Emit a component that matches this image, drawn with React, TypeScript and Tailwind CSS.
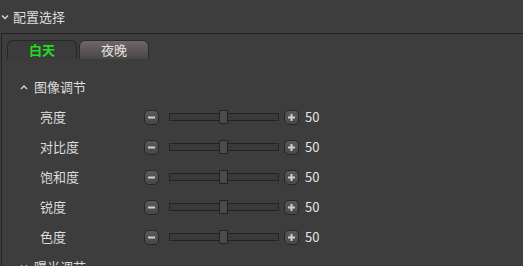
import React from "react";

const rows = ["亮度", "对比度", "饱和度", "锐度", "色度"];

const Chevron = ({ up = false }: { up?: boolean }) => (
  <svg width="8" height="6" viewBox="0 0 8 6" className="shrink-0">
    <path
      d={up ? "M1 5 L4 2 L7 5" : "M1 1.5 L4 4.5 L7 1.5"}
      fill="none"
      stroke="#d8d8d8"
      strokeWidth="1.4"
    />
  </svg>
);

const StepButton = ({ plus = false }: { plus?: boolean }) => (
  <div className="flex h-[15px] w-[15px] shrink-0 items-center justify-center rounded-[5px] border border-[#262626] bg-gradient-to-b from-[#5a5a5a] to-[#474747]">
    <svg width="9" height="9" viewBox="0 0 9 9">
      <rect x="1" y="3.5" width="7" height="2" fill="#d0d0d0" />
      {plus && <rect x="3.5" y="1" width="2" height="7" fill="#d0d0d0" />}
    </svg>
  </div>
);

const SliderRow = ({ label, value }: { label: string; value: number }) => (
  <div className="flex h-[30px] items-center">
    <div className="w-[142px] shrink-0 pl-[38px] text-[13px] text-[#dcdcdc]">{label}</div>
    <StepButton />
    <div className="relative ml-[10px] h-[8px] w-[110px] border border-[#232323] bg-[#3a3a3a]">
      <div
        className="absolute top-[-4px] h-[14px] w-[9px] border border-[#222] bg-[#4b4b4b]"
        style={{ left: `${(value / 100) * 110 - 6}px` }}
      />
    </div>
    <div className="ml-[5px]">
      <StepButton plus />
    </div>
    <div className="ml-[6px] text-[13px] text-[#e6e6e6]">{value}</div>
  </div>
);

export default function App() {
  return (
    <div
      className="h-[266px] w-[523px] overflow-hidden bg-[#3d3d3d] text-[#dcdcdc]"
      style={{ fontFamily: '"Noto Sans CJK SC", "Noto Sans", sans-serif' }}
    >
      <div className="flex h-[33px] items-center gap-[4px] pl-[1px] text-[13px]">
        <Chevron />
        <span>配置选择</span>
      </div>
      <div className="ml-[1px] h-full border-l border-t border-[#232323]">
        <div className="flex gap-[2px] pl-[5px] pt-[6px]">
          <div className="flex h-[19px] w-[70px] items-center justify-center rounded-t-[6px] border border-b-0 border-[#262626] bg-[#3b3b3b] text-[13px] font-bold text-[#22dd22]">
            白天
          </div>
          <div className="flex h-[19px] w-[70px] items-center justify-center rounded-t-[6px] border border-b-0 border-[#2a2a2a] bg-gradient-to-b from-[#6e6866] to-[#4a4645] text-[13px] text-[#e4e4e4]">
            夜晚
          </div>
        </div>
        <div className="mt-[13px] flex h-[30px] items-center gap-[6px] pl-[18px] text-[13px]">
          <Chevron up />
          <span>图像调节</span>
        </div>
        {rows.map((r) => (
          <SliderRow key={r} label={r} value={50} />
        ))}
        <div className="flex h-[30px] items-center gap-[6px] pl-[18px] text-[13px]">
          <Chevron />
          <span>曝光调节</span>
        </div>
      </div>
    </div>
  );
}
